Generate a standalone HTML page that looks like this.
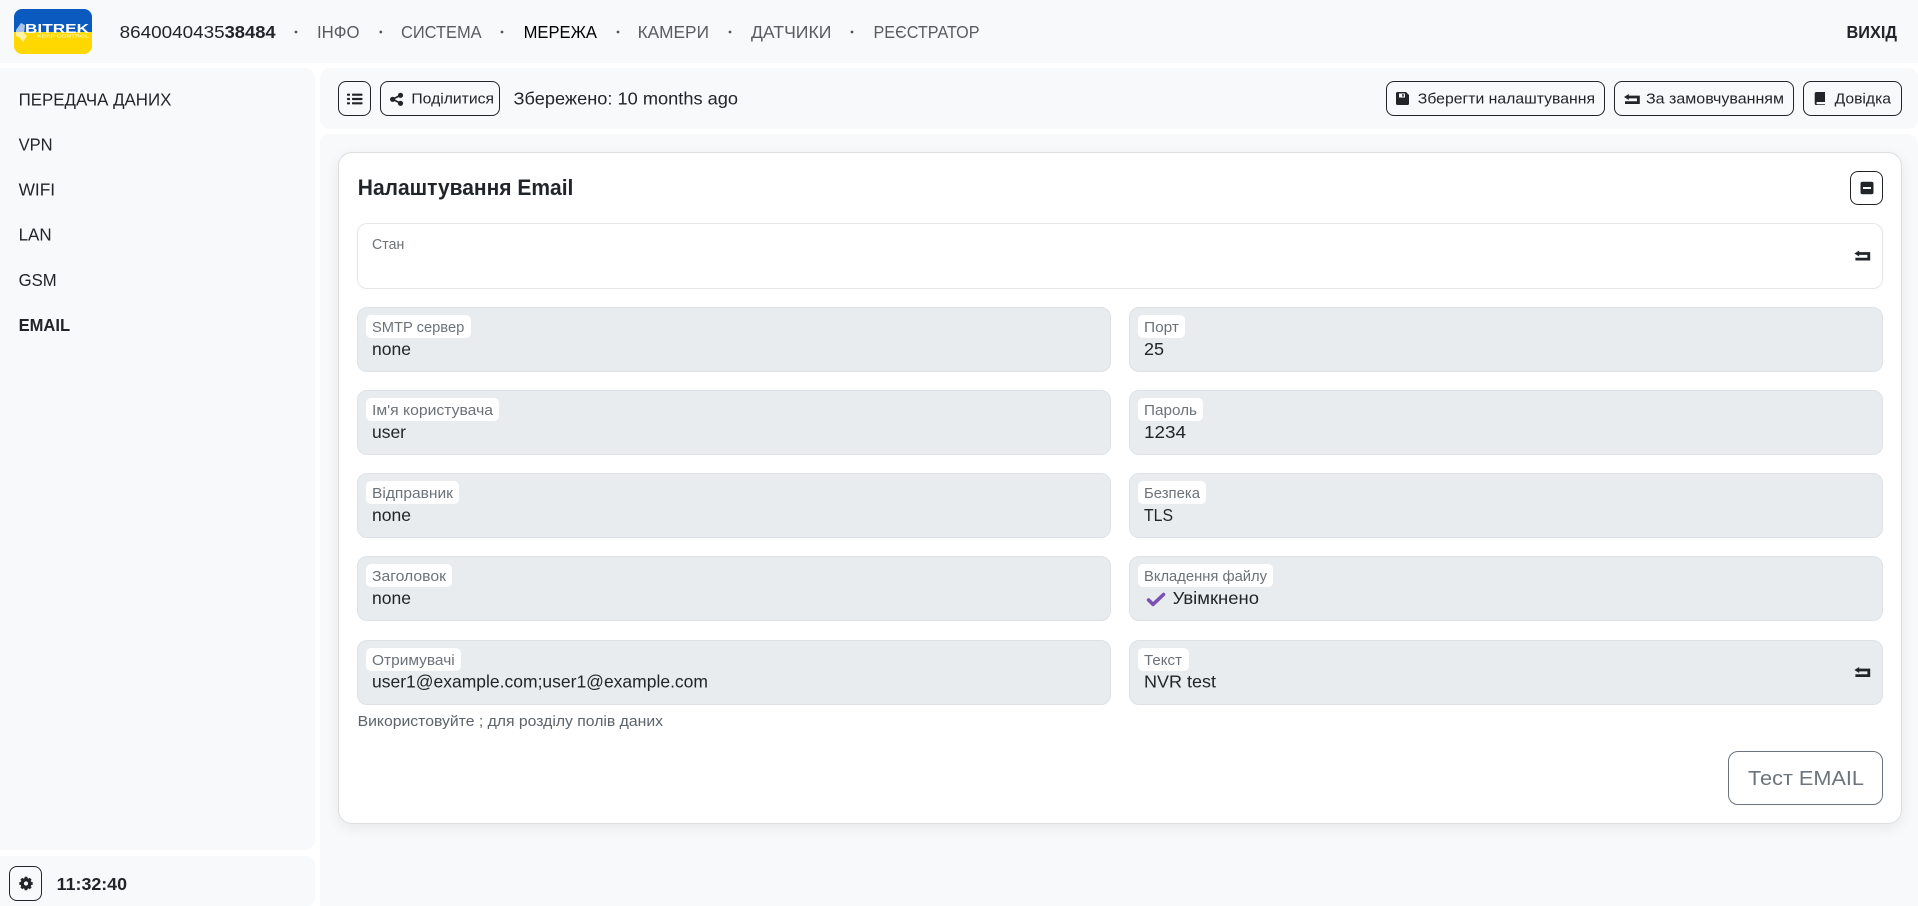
<!DOCTYPE html>
<html lang="uk">
<head>
<meta charset="utf-8">
<title>Налаштування Email</title>
<style>
html,body{margin:0;padding:0;background:#fff;width:1918px;height:906px;overflow:hidden}
.a{position:absolute;box-sizing:border-box}
.p{background:#f8f9fa}
.f{background:#e9ecef;border:1px solid #dee2e6;border-radius:10px;height:65px}
.l{left:357px;width:754px}
.r{left:1129px;width:754px}
.c{background:#fff;border-radius:5px;height:23px}
.b{border:1.3px solid #212529;border-radius:8px}
svg{position:absolute;left:0;top:0}
text{font-family:"Liberation Sans",sans-serif;fill:#212529;font-size:17.5px;transform:translateY(-.5px)}
.n{fill:#595c5f}
.lb{fill:#6c7278;font-size:14.8px}
.sm{font-size:14.8px}
.v{font-size:17.5px}
</style>
</head>
<body>
<div class="a p" style="left:0;top:0;width:1918px;height:63px"></div>
<div class="a p" style="left:0;top:68px;width:315px;height:782px;border-radius:0 10px 10px 0"></div>
<div class="a p" style="left:0;top:856px;width:315px;height:50px;border-radius:0 8px 8px 0"></div>
<div class="a p" style="left:320px;top:68px;width:1598px;height:61px;border-radius:10px"></div>
<div class="a p" style="left:320px;top:134px;width:1598px;height:772px;border-radius:10px 10px 0 0"></div>

<div class="a" style="left:338px;top:152px;width:1564px;height:672px;background:#fff;border:1px solid #dcdee0;border-radius:14px;box-shadow:0 4px 14px rgba(0,0,0,.07)"></div>

<div class="a" style="left:357px;top:223px;width:1526px;height:66px;background:#fff;border:1px solid #e3e5e8;border-radius:10px"></div>

<div class="a f l" style="top:307px"></div><div class="a f r" style="top:307px"></div>
<div class="a f l" style="top:390px"></div><div class="a f r" style="top:390px"></div>
<div class="a f l" style="top:473px"></div><div class="a f r" style="top:473px"></div>
<div class="a f l" style="top:556px"></div><div class="a f r" style="top:556px"></div>
<div class="a f l" style="top:640px"></div><div class="a f r" style="top:640px"></div>

<div class="a c" style="left:366px;top:315px;width:105px"></div>
<div class="a c" style="left:1138px;top:315px;width:47px"></div>
<div class="a c" style="left:366px;top:398px;width:133px"></div>
<div class="a c" style="left:1138px;top:398px;width:65px"></div>
<div class="a c" style="left:366px;top:481px;width:93px"></div>
<div class="a c" style="left:1138px;top:481px;width:68px"></div>
<div class="a c" style="left:366px;top:564px;width:86px"></div>
<div class="a c" style="left:1138px;top:564px;width:135px"></div>
<div class="a c" style="left:366px;top:648px;width:95px"></div>
<div class="a c" style="left:1138px;top:648px;width:51px"></div>

<div class="a b" style="left:338px;top:81px;width:33px;height:35px"></div>
<div class="a b" style="left:380px;top:81px;width:120px;height:35px"></div>
<div class="a b" style="left:1386px;top:81px;width:219px;height:35px"></div>
<div class="a b" style="left:1614px;top:81px;width:180px;height:35px"></div>
<div class="a b" style="left:1803px;top:81px;width:99px;height:35px"></div>
<div class="a b" style="left:1850px;top:171px;width:33px;height:34px"></div>
<div class="a b" style="left:9px;top:866px;width:33px;height:35px"></div>
<div class="a" style="left:1728px;top:751px;width:155px;height:54px;border:1.3px solid #6c757d;border-radius:10px"></div>

<svg width="1918" height="906" viewBox="0 0 1918 906" xmlns="http://www.w3.org/2000/svg">
<defs>
<clipPath id="lg"><rect x="14" y="9" width="78" height="45" rx="8"/></clipPath>
<g id="rp"><path d="M2.5 3H14.4V8.6H1" fill="none" stroke="#212529" stroke-width="2.8"/><path d="M4.8 0L0 3L4.8 6Z" fill="#212529"/></g>
</defs>

<!-- logo -->
<g clip-path="url(#lg)">
<rect x="14" y="9" width="78" height="23" fill="#0a5ac0"/>
<rect x="14" y="32" width="78" height="22" fill="#ffd800"/>
<path d="M16 30L21 23L25 25L24 33L27 36L23 42L20 38L16 36Z" fill="#fff" opacity=".65"/>
<text x="25" y="33.5" textLength="64" lengthAdjust="spacingAndGlyphs" style="font-size:12.5px;font-weight:bold;fill:#fff">BITREK</text>
<text x="37" y="38" textLength="52" lengthAdjust="spacingAndGlyphs" style="font-size:4.4px;font-weight:bold;fill:#fff3a8">KEEP CONTROL</text>
</g>

<!-- header -->
<text x="119.6" y="38.4" textLength="105" lengthAdjust="spacingAndGlyphs">8640040435</text>
<text x="224.6" y="38.4" textLength="51" lengthAdjust="spacingAndGlyphs" font-weight="bold">38484</text>
<g fill="#555">
<circle cx="296" cy="32" r="1.4"/><circle cx="380.8" cy="32" r="1.4"/><circle cx="502" cy="32" r="1.4"/><circle cx="618" cy="32" r="1.4"/><circle cx="730" cy="32" r="1.4"/><circle cx="852" cy="32" r="1.4"/>
</g>
<text class="n" x="317" y="38.4" textLength="42.6" lengthAdjust="spacingAndGlyphs">ІНФО</text>
<text class="n" x="401" y="38.4" textLength="80.6" lengthAdjust="spacingAndGlyphs">СИСТЕМА</text>
<text x="523.6" y="38.4" textLength="73.4" lengthAdjust="spacingAndGlyphs" style="fill:#000">МЕРЕЖА</text>
<text class="n" x="637.6" y="38.4" textLength="71.4" lengthAdjust="spacingAndGlyphs">КАМЕРИ</text>
<text class="n" x="751" y="38.4" textLength="80.4" lengthAdjust="spacingAndGlyphs">ДАТЧИКИ</text>
<text class="n" x="873.5" y="38.4" textLength="106" lengthAdjust="spacingAndGlyphs">РЕЄСТРАТОР</text>
<text x="1846.5" y="38.4" textLength="50.5" lengthAdjust="spacingAndGlyphs" font-weight="bold">ВИХІД</text>

<!-- sidebar -->
<text x="18.6" y="106" textLength="152.8" lengthAdjust="spacingAndGlyphs">ПЕРЕДАЧА ДАНИХ</text>
<text x="18.6" y="151" textLength="34" lengthAdjust="spacingAndGlyphs">VPN</text>
<text x="18.6" y="196" textLength="36.5" lengthAdjust="spacingAndGlyphs">WIFI</text>
<text x="18.6" y="241.2" textLength="33" lengthAdjust="spacingAndGlyphs">LAN</text>
<text x="18.6" y="286.4" textLength="38" lengthAdjust="spacingAndGlyphs">GSM</text>
<text x="18.6" y="331.6" textLength="51.5" lengthAdjust="spacingAndGlyphs" font-weight="bold">EMAIL</text>

<!-- footer -->
<circle cx="26" cy="883.5" r="3.8" fill="none" stroke="#212529" stroke-width="3.4"/>
<path d="M26 876.8V880M26 887V890.2M19.3 883.5H22.5M29.5 883.5H32.7M21.3 878.8L23.5 881M28.5 886L30.7 888.2M21.3 888.2L23.5 886M28.5 881L30.7 878.8" stroke="#212529" stroke-width="2.8" fill="none"/>
<text x="56.7" y="890.7" textLength="70.3" lengthAdjust="spacingAndGlyphs" font-weight="bold">11:32:40</text>

<!-- toolbar left -->
<g fill="#212529">
<rect x="347" y="93.6" width="3" height="2.2" rx=".7"/><rect x="352" y="93.6" width="10.5" height="2.2" rx=".7"/>
<rect x="347" y="97.9" width="3" height="2.2" rx=".7"/><rect x="352" y="97.9" width="10.5" height="2.2" rx=".7"/>
<rect x="347" y="102.2" width="3" height="2.2" rx=".7"/><rect x="352" y="102.2" width="10.5" height="2.2" rx=".7"/>
<circle cx="400.5" cy="95.3" r="2.6"/><circle cx="392.6" cy="99.3" r="2.6"/><circle cx="400.5" cy="103.3" r="2.6"/>
<path d="M400.5 95.3L392.6 99.3L400.5 103.3" fill="none" stroke="#212529" stroke-width="1.7"/>
</g>
<text class="sm" x="411.4" y="104" textLength="82.6" lengthAdjust="spacingAndGlyphs">Поділитися</text>
<text x="513.5" y="105" textLength="224.5" lengthAdjust="spacingAndGlyphs">Збережено: 10 months ago</text>

<!-- toolbar right -->
<path fill-rule="evenodd" d="M1397.5 92H1406L1409 95V103.5A1.5 1.5 0 0 1 1407.5 105H1397.5A1.5 1.5 0 0 1 1396 103.5V93.5A1.5 1.5 0 0 1 1397.5 92ZM1399 93.5V97.5H1405V93.5Z" fill="#212529"/>
<rect x="1402.2" y="94.2" width="1.6" height="2.4" fill="#212529"/>
<text class="sm" x="1417.8" y="104" textLength="177.2" lengthAdjust="spacingAndGlyphs">Зберегти налаштування</text>
<use href="#rp" x="1624" y="94"/>
<text class="sm" x="1646" y="104" textLength="138" lengthAdjust="spacingAndGlyphs">За замовчуванням</text>
<path d="M1816.5 92H1825V102H1817A1.4 1.4 0 0 0 1817 104.3H1825V105H1816.5A1.8 1.8 0 0 1 1814.7 103.2V93.8A1.8 1.8 0 0 1 1816.5 92Z" fill="#212529"/>
<text class="sm" x="1834.6" y="104" textLength="56.4" lengthAdjust="spacingAndGlyphs">Довідка</text>

<!-- card -->
<text x="357.8" y="195.6" textLength="215.6" lengthAdjust="spacingAndGlyphs" style="font-size:22px;font-weight:bold">Налаштування Email</text>
<rect x="1860.5" y="181.7" width="13" height="12.6" rx="2" fill="#212529"/>
<rect x="1863" y="187" width="8" height="2" fill="#fff"/>

<text class="lb" x="372" y="249.3" textLength="32.3" lengthAdjust="spacingAndGlyphs">Стан</text>
<use href="#rp" x="1854.4" y="250.5"/>

<text class="lb" x="372" y="332.7" textLength="92.3" lengthAdjust="spacingAndGlyphs">SMTP сервер</text>
<text class="v" x="372" y="355.6" textLength="39" lengthAdjust="spacingAndGlyphs">none</text>
<text class="lb" x="1144" y="332.7" textLength="35" lengthAdjust="spacingAndGlyphs">Порт</text>
<text class="v" x="1144" y="355.6" textLength="20" lengthAdjust="spacingAndGlyphs">25</text>

<text class="lb" x="372" y="415.7" textLength="121" lengthAdjust="spacingAndGlyphs">Ім'я користувача</text>
<text class="v" x="372" y="438.6" textLength="34" lengthAdjust="spacingAndGlyphs">user</text>
<text class="lb" x="1144" y="415.7" textLength="53" lengthAdjust="spacingAndGlyphs">Пароль</text>
<text class="v" x="1144" y="438.6" textLength="42" lengthAdjust="spacingAndGlyphs">1234</text>

<text class="lb" x="372" y="498.7" textLength="81" lengthAdjust="spacingAndGlyphs">Відправник</text>
<text class="v" x="372" y="521.6" textLength="39" lengthAdjust="spacingAndGlyphs">none</text>
<text class="lb" x="1144" y="498.7" textLength="56" lengthAdjust="spacingAndGlyphs">Безпека</text>
<text class="v" x="1144" y="521.6" textLength="29" lengthAdjust="spacingAndGlyphs">TLS</text>

<text class="lb" x="372" y="581.7" textLength="74" lengthAdjust="spacingAndGlyphs">Заголовок</text>
<text class="v" x="372" y="604.3" textLength="39" lengthAdjust="spacingAndGlyphs">none</text>
<text class="lb" x="1144" y="581.7" textLength="123" lengthAdjust="spacingAndGlyphs">Вкладення файлу</text>
<path d="M1148.6 600L1153 604.4L1163.5 594.5" fill="none" stroke="#7952b3" stroke-width="3.6" stroke-linecap="round" stroke-linejoin="round"/>
<text class="v" x="1172.7" y="604.3" textLength="86.3" lengthAdjust="spacingAndGlyphs">Увімкнено</text>

<text class="lb" x="372" y="665.4" textLength="82.7" lengthAdjust="spacingAndGlyphs">Отримувачі</text>
<text class="v" x="372" y="688.2" textLength="336" lengthAdjust="spacingAndGlyphs">user1@example.com;user1@example.com</text>
<text class="lb" x="1144" y="665.4" textLength="38" lengthAdjust="spacingAndGlyphs">Текст</text>
<text class="v" x="1144" y="688.2" textLength="72" lengthAdjust="spacingAndGlyphs">NVR test</text>
<use href="#rp" x="1854.4" y="667"/>

<text x="357.6" y="726.5" textLength="305.4" lengthAdjust="spacingAndGlyphs" style="font-size:14.8px;fill:#5c636a">Використовуйте ; для розділу полів даних</text>
<text x="1748" y="785.5" textLength="116" lengthAdjust="spacingAndGlyphs" style="font-size:20px;fill:#6c757d">Тест EMAIL</text>
</svg>
</body>
</html>
